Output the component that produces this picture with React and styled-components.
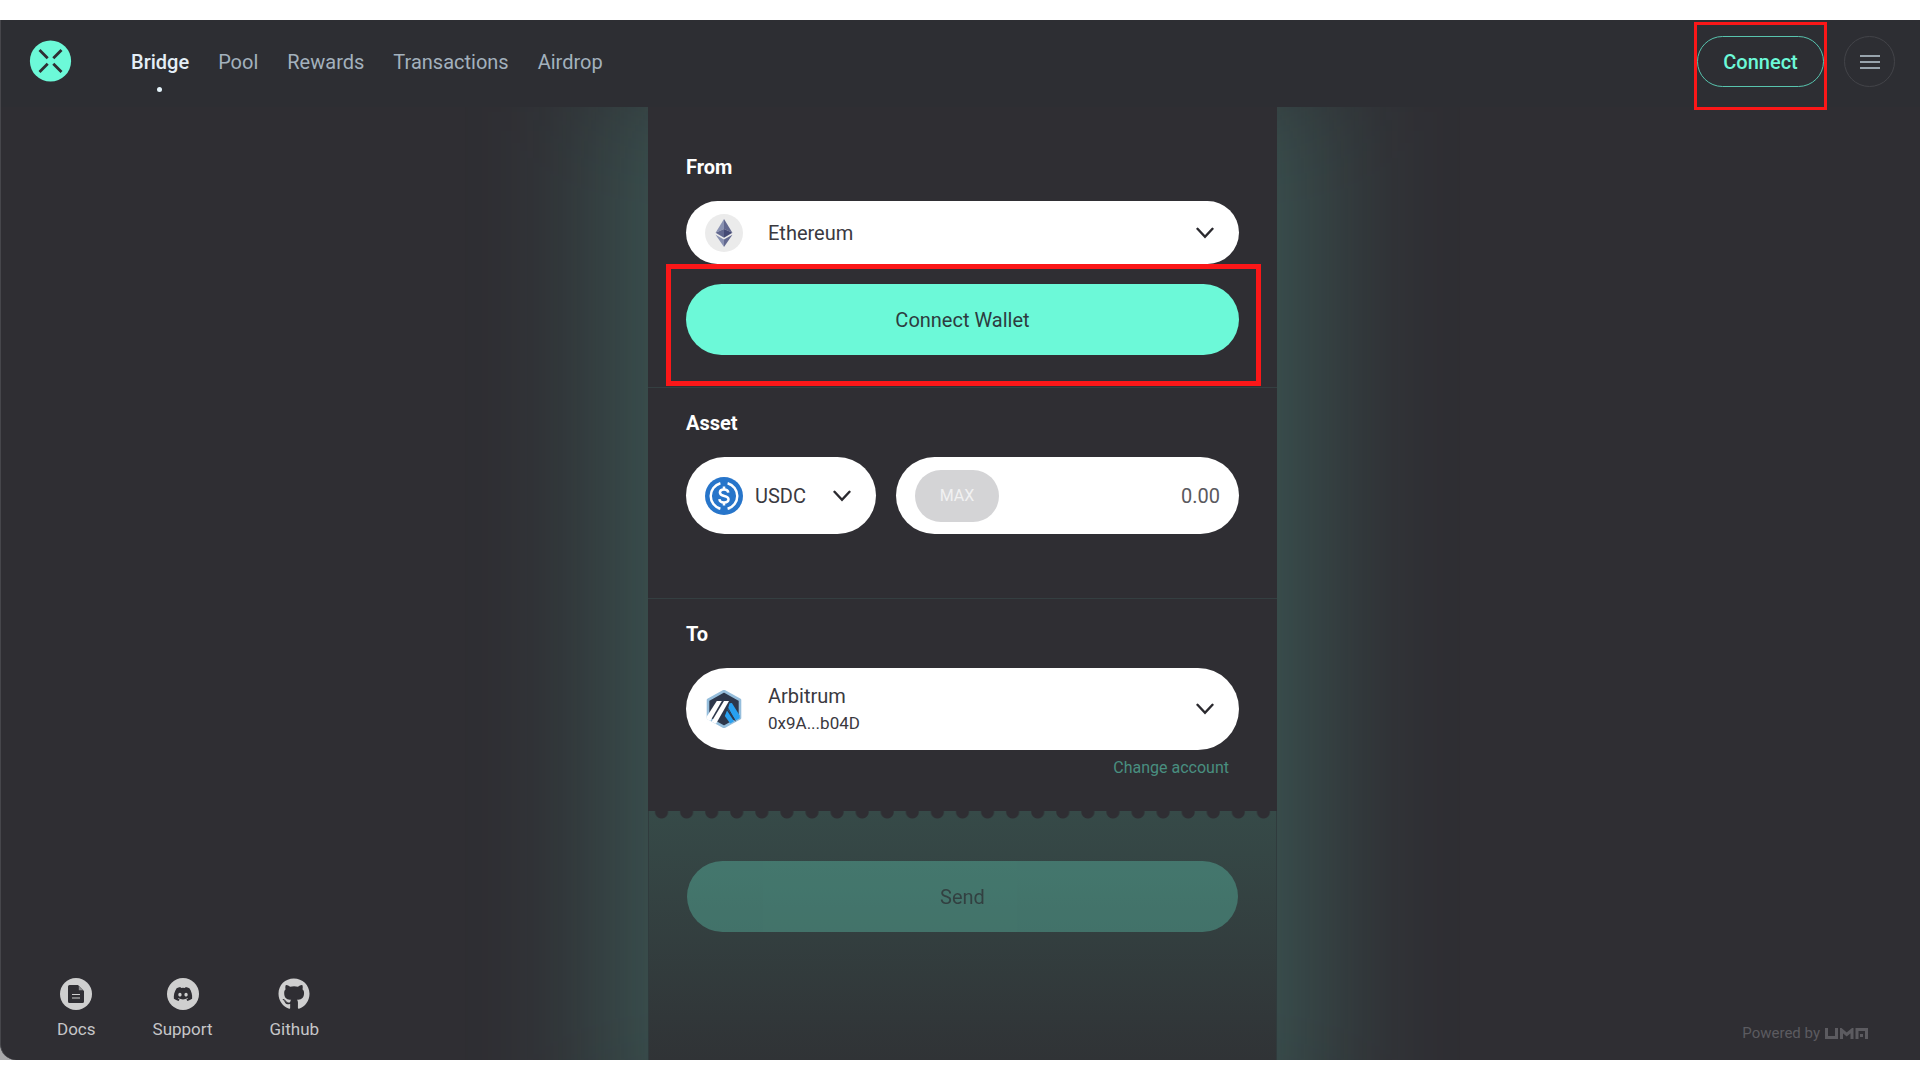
import React from "react";
import styled, { createGlobalStyle } from "styled-components";
import { FaGithub, FaDiscord } from "react-icons/fa";

const mint = "#6cf9d8";
const ink = "#2f2e33";

const GlobalStyle = createGlobalStyle`
  *, *::before, *::after { box-sizing: border-box; }
  body {
    margin: 0;
    background: #ffffff;
    font-family: Roboto, "Open Sans", sans-serif;
    font-size: 20px;
    line-height: 24px;
    color: #ffffff;
  }
  button, input, select { font: inherit; }
`;

const Page = styled.div`
  display: flex;
  flex-direction: column;
  min-height: 100vh;
  padding: 20px 0;
`;

const Backdrop = styled.div`
  display: flex;
  flex: 1;
  background: #a9a9ab;
`;

const Window = styled.div`
  display: flex;
  flex: 1;
  flex-direction: column;
  min-width: 0;
  overflow: hidden;
  background: ${ink};
  border-left: 1px solid #46464b;
  border-radius: 0 0 0 16px;
`;

const Header = styled.header`
  position: relative;
  z-index: 2;
  display: flex;
  align-items: center;
  gap: 59px;
  height: 87px;
  padding: 0 25px 4px 28px;
  background: #2d2e33;
`;

const HomeLink = styled.a`
  display: flex;
`;

const Nav = styled.nav`
  display: flex;
  flex: 1;
  gap: 29px;
`;

const NavLink = styled.a`
  position: relative;
  color: ${(p) => (p.$active ? "#e4eef7" : "#a3b1bd")};
  font-weight: ${(p) => (p.$active ? 500 : 400)};
  text-decoration: none;

  &::after {
    content: "";
    display: ${(p) => (p.$active ? "block" : "none")};
    position: absolute;
    left: calc(50% - 3px);
    top: 37px;
    width: 5px;
    height: 5px;
    border-radius: 50%;
    background: #e4f3fa;
  }
`;

const HeaderActions = styled.div`
  display: flex;
  align-items: center;
  gap: 20px;
`;

const Highlighted = styled.div`
  position: relative;
  padding-top: ${(p) => p.$space || 0}px;

  &::after {
    content: "";
    position: absolute;
    inset: ${(p) => p.$inset};
    border: ${(p) => p.$stroke}px solid #fb1718;
    pointer-events: none;
  }
`;

const ConnectButton = styled.button`
  display: block;
  width: 127px;
  height: 51px;
  padding: 0;
  border: 1px solid #58c4ae;
  border-radius: 26px;
  background: transparent;
  color: ${mint};
  font-weight: 500;
`;

const MenuButton = styled.button`
  display: flex;
  align-items: center;
  justify-content: center;
  width: 51px;
  height: 51px;
  padding: 0;
  border: 1px solid #434449;
  border-radius: 50%;
  background: transparent;
`;

const Main = styled.main`
  display: grid;
  flex: 1;
  grid-template-columns: 1fr 629px 1fr;
  padding-left: 4px;
`;

const Card = styled.div`
  position: relative;
  display: flex;
  flex-direction: column;

  &::before {
    content: "";
    position: absolute;
    inset: -40px -40px -90px;
    background: rgba(108, 249, 216, 0.2);
    filter: blur(68px);
  }
`;

const Section = styled.section`
  position: relative;
  padding: ${(p) => p.$pad};
  background: ${ink};
  border-bottom: ${(p) => (p.$divided ? "1px solid #343f41" : "0")};
`;

const Heading = styled.h2`
  margin: 0 0 22px;
  font-size: 20px;
  font-weight: 700;
  line-height: 24px;
`;

const Pill = styled.label`
  display: flex;
  flex-shrink: 0;
  align-items: center;
  gap: ${(p) => (p.$compact ? 12 : 25)}px;
  width: ${(p) => (p.$compact ? "190px" : "auto")};
  height: ${(p) => p.$height}px;
  padding: 0 25px 0 19px;
  border-radius: 41px;
  background: #ffffff;
  color: #3a393f;
`;

const PillText = styled.span`
  display: flex;
  flex: 1;
  flex-direction: column;
  gap: 3px;
  min-width: 0;
`;

const Select = styled.select`
  flex: 1;
  width: 100%;
  min-width: 0;
  height: 24px;
  padding: 0;
  border: 0;
  appearance: none;
  background: transparent;
  color: inherit;
  line-height: 24px;
`;

const Address = styled.span`
  font-size: 17px;
  line-height: 24px;
`;

const WideButton = styled.button`
  display: block;
  width: 100%;
  height: 71px;
  border: 0;
  border-radius: 36px;
  background: ${mint};
  color: #2d3c3f;
  opacity: ${(p) => (p.disabled ? 0.28 : 1)};
`;

const AssetRow = styled.div`
  display: flex;
  gap: 20px;
`;

const AmountBox = styled.div`
  display: flex;
  flex: 1;
  align-items: center;
  min-width: 0;
  height: 77px;
  padding: 0 19px;
  border-radius: 41px;
  background: #ffffff;
`;

const MaxButton = styled.button`
  flex-shrink: 0;
  width: 84px;
  height: 52px;
  padding: 0;
  border: 0;
  border-radius: 26px;
  background: #d4d4d6;
  color: #f1f1f2;
  font-size: 16px;
`;

const AmountInput = styled.input`
  flex: 1;
  min-width: 0;
  padding: 0;
  border: 0;
  background: transparent;
  color: #5a595e;
  text-align: right;
`;

const ChangeRow = styled.div`
  display: flex;
  justify-content: flex-end;
  padding: 6px 10px 0 0;
`;

const ChangeButton = styled.button`
  padding: 0;
  border: 0;
  background: transparent;
  color: #498f80;
  font-size: 16px;
  line-height: 24px;
`;

const Ticket = styled.section`
  position: relative;
  flex: 1;
  padding: 50px 38px 126px;
  background: linear-gradient(#364a48, #303336);
  border: solid #303b3d;
  border-width: 0 1px;

  &::before {
    content: "";
    position: absolute;
    inset: 0 0 auto;
    height: 8px;
    background: radial-gradient(circle at 50% 1px, ${ink} 6px, transparent 7px) 0 0 / 4% 8px;
  }
`;

const SideColumn = styled.aside`
  display: flex;
  align-items: flex-end;
  justify-content: ${(p) => (p.$end ? "flex-end" : "flex-start")};
  padding: 0 52px ${(p) => (p.$end ? 17 : 19)}px;
`;

const FooterLinks = styled.nav`
  display: flex;
  gap: 57px;
`;

const FooterLink = styled.a`
  display: flex;
  flex-direction: column;
  align-items: center;
  gap: 7px;
  color: #c6c6c8;
  font-size: 17px;
  line-height: 24px;
  text-decoration: none;
`;

const IconDisc = styled.span`
  display: flex;
  align-items: center;
  justify-content: center;
  width: 32px;
  height: 32px;
  border-radius: 50%;
  background: ${(p) => (p.$plain ? "transparent" : "#cfcfcf")};
  color: ${(p) => (p.$plain ? "#cfcfcf" : ink)};
`;

const PoweredBy = styled.a`
  position: relative;
  display: flex;
  align-items: center;
  gap: 5px;
  color: #5c5b60;
  font-size: 15px;
  line-height: 20px;
  text-decoration: none;
`;

const AcrossLogo = () => (
  <svg width="43" height="43" viewBox="0 0 43 43" aria-hidden="true">
    <circle cx="21.5" cy="21" r="20.6" fill={mint} />
    <path
      d="M10.5 10l8.2 8.2M32.5 10l-8.2 8.2M10.5 32l8.2-8.2M32.5 32l-8.2-8.2"
      stroke={ink}
      strokeWidth="2.8"
    />
  </svg>
);

const MenuIcon = () => (
  <svg width="20" height="14" viewBox="0 0 20 14" aria-hidden="true">
    <path d="M0 1h20M0 7h20M0 13h20" stroke="#98a4ad" strokeWidth="2" />
  </svg>
);

const Chevron = () => (
  <svg width="18" height="12" viewBox="0 0 18 12" fill="none" aria-hidden="true">
    <path d="M1.5 1.8L9 9.8l7.5-8" stroke="#2a292e" strokeWidth="2.4" strokeLinecap="round" />
  </svg>
);

const EthereumIcon = () => (
  <svg width="38" height="38" viewBox="0 0 38 38" aria-hidden="true">
    <circle cx="19" cy="19" r="19" fill="#ebebeb" />
    <path d="M19 5l-8.4 13.8L19 15z" fill="#8a92b2" />
    <path d="M19 5v10l8.4 3.8z" fill="#62688f" />
    <path d="M10.6 18.8L19 15v8.8z" fill="#62688f" />
    <path d="M27.4 18.8L19 15v8.8z" fill="#454a75" />
    <path d="M10.6 20.8L19 33v-7.4z" fill="#8a92b2" />
    <path d="M27.4 20.8L19 33v-7.4z" fill="#62688f" />
  </svg>
);

const UsdcIcon = () => (
  <svg width="38" height="38" viewBox="0 0 38 38" fill="none" aria-hidden="true">
    <circle cx="19" cy="19" r="19" fill="#2775ca" />
    <g stroke="#fff" strokeWidth="2.5">
      <path d="M15.4 6.2a13.3 13.3 0 0 0 0 25.6M22.6 6.2a13.3 13.3 0 0 1 0 25.6" />
      <path d="M23.3 15.6c-.3-2-1.9-3-4.3-3-2.5 0-4.1 1.1-4.1 3 0 4.9 8.6 1.8 8.6 6.6 0 2-1.8 3.2-4.5 3.2s-4.4-1.2-4.6-3.3" />
      <path d="M19 9.4v3.4M19 25.2v3.4" />
    </g>
  </svg>
);

const ArbitrumIcon = () => (
  <svg width="38" height="38" viewBox="0 0 38 38" aria-hidden="true">
    <defs>
      <clipPath id="arbitrum-hex">
        <path d="M19 0l17.5 9v20L19 38 1.5 29V9z" />
      </clipPath>
    </defs>
    <path d="M19 1l16 9v18l-16 9-16-9V10z" fill="#2d374b" stroke="#96bedc" strokeWidth="2.6" strokeLinejoin="round" />
    <g clipPath="url(#arbitrum-hex)">
      <path d="M24.5 13.2l2.4-.2 7.8 12.6v2.6l-4.2 2.4-7.6-11.4z" fill="#28a0f0" />
      <path d="M22 20.5l7 10.8-3.8 2.2-5.4-7.6z" fill="#28a0f0" />
      <path d="M11.8 11h5L5 31.5l-4.2-2.4V28z" fill="#fff" />
      <path d="M19 11h5L10.6 34.6l-4.4-2.4z" fill="#fff" />
      <path d="M23 18.2l7.4 13" stroke="#2d374b" strokeWidth="1" />
    </g>
  </svg>
);

const DocsIcon = () => (
  <svg width="16" height="18" viewBox="0 0 16 18" aria-hidden="true">
    <path d="M1.5 0H10l6 6v10.5a1.5 1.5 0 0 1-1.5 1.5h-13A1.5 1.5 0 0 1 0 16.5v-15A1.5 1.5 0 0 1 1.5 0z" fill={ink} />
    <path d="M10.8 1v4.2H15z" fill="#8d8d8f" />
    <path d="M4 9.5h8M4 13h8" stroke="#cfcfcf" strokeWidth="1.2" />
  </svg>
);

const UmaLogo = () => (
  <svg width="43" height="11" viewBox="0 0 43 11" fill="none" role="img" aria-label="UMA">
    <g stroke="#5c5b60" strokeWidth="3">
      <path d="M1.5 0v9.5h10V0" />
      <path d="M16.5 11V2l5.2 4.5L27 2v9" />
      <path d="M32 11V1.5h9.5V11" />
    </g>
    <path d="M35 6h3v3h-3z" fill="#5c5b60" />
  </svg>
);

const navItems = ["Bridge", "Pool", "Rewards", "Transactions", "Airdrop"];

const footerItems = [
  { label: "Docs", icon: <DocsIcon /> },
  { label: "Support", icon: <FaDiscord size={20} /> },
  { label: "Github", icon: <FaGithub size={32} />, plain: true },
];

export default function App() {
  return (
    <Page>
      <GlobalStyle />
      <Backdrop>
        <Window>
          <Header>
            <HomeLink href="#home" aria-label="Across home">
              <AcrossLogo />
            </HomeLink>
            <Nav aria-label="Main">
              {navItems.map((item, i) => (
                <NavLink key={item} href={`#${item.toLowerCase()}`} $active={i === 0}>
                  {item}
                </NavLink>
              ))}
            </Nav>
            <HeaderActions>
              <Highlighted $inset="-14px -3px -23px" $stroke={3}>
                <ConnectButton type="button">Connect</ConnectButton>
              </Highlighted>
              <MenuButton type="button" aria-label="Menu">
                <MenuIcon />
              </MenuButton>
            </HeaderActions>
          </Header>

          <Main>
            <SideColumn>
              <FooterLinks aria-label="Resources">
                {footerItems.map(({ label, icon, plain }) => (
                  <FooterLink key={label} href={`#${label.toLowerCase()}`}>
                    <IconDisc $plain={plain}>{icon}</IconDisc>
                    {label}
                  </FooterLink>
                ))}
              </FooterLinks>
            </SideColumn>

            <Card>
              <Section $divided $pad="48px 38px 32px">
                <Heading>From</Heading>
                <Pill $height={63}>
                  <EthereumIcon />
                  <Select aria-label="From chain" defaultValue="Ethereum">
                    <option>Ethereum</option>
                    <option>Arbitrum</option>
                  </Select>
                  <Chevron />
                </Pill>
                <Highlighted $inset="0 -22px -31px -20px" $stroke={5} $space={20}>
                  <WideButton type="button">Connect Wallet</WideButton>
                </Highlighted>
              </Section>

              <Section $divided $pad="23px 38px 64px">
                <Heading>Asset</Heading>
                <AssetRow>
                  <Pill $compact $height={77}>
                    <UsdcIcon />
                    <Select aria-label="Asset" defaultValue="USDC">
                      <option>USDC</option>
                      <option>ETH</option>
                    </Select>
                    <Chevron />
                  </Pill>
                  <AmountBox>
                    <MaxButton type="button">MAX</MaxButton>
                    <AmountInput aria-label="Amount" defaultValue="0.00" inputMode="decimal" />
                  </AmountBox>
                </AssetRow>
              </Section>

              <Section $pad="23px 38px 31px">
                <Heading>To</Heading>
                <Pill $height={82}>
                  <ArbitrumIcon />
                  <PillText>
                    <Select aria-label="To chain" defaultValue="Arbitrum">
                      <option>Arbitrum</option>
                      <option>Ethereum</option>
                    </Select>
                    <Address>0x9A...b04D</Address>
                  </PillText>
                  <Chevron />
                </Pill>
                <ChangeRow>
                  <ChangeButton type="button">Change account</ChangeButton>
                </ChangeRow>
              </Section>

              <Ticket>
                <WideButton type="button" disabled>
                  Send
                </WideButton>
              </Ticket>
            </Card>

            <SideColumn $end>
              <PoweredBy href="#uma">
                Powered by <UmaLogo />
              </PoweredBy>
            </SideColumn>
          </Main>
        </Window>
      </Backdrop>
    </Page>
  );
}
